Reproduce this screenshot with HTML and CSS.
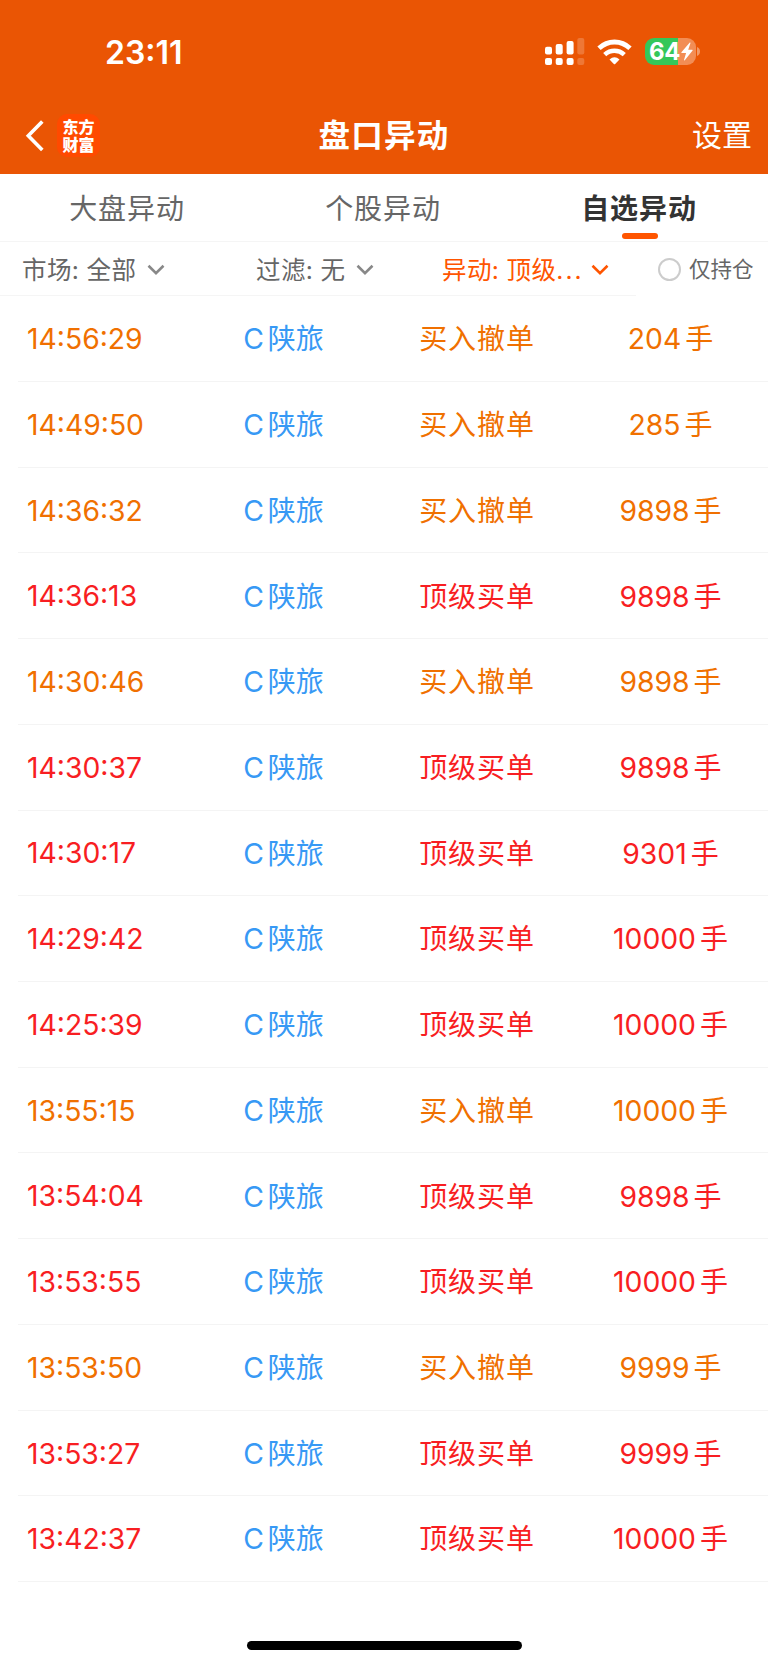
FILE: index.html
```
<!DOCTYPE html>
<html lang="zh-CN">
<head>
<meta charset="utf-8">
<title>盘口异动</title>
<link rel="stylesheet" href="styles.css">
</head>
<body>
<div class="screen">
<header class="header">
  <div class="status">
    <div class="clock">23:11</div>
    <div class="indicators">
      <svg class="signal" width="40" height="28" viewBox="0 0 40 28" fill="#fff">
        <rect x="0" y="8.700" width="7" height="7.800" rx="2"/><rect x="10.700" y="6" width="7" height="10.500" rx="2"/><rect x="21.600" y="3" width="7" height="13.500" rx="2"/><rect x="32.300" y="0" width="7" height="16.500" rx="2" opacity=".2"/>
        <rect x="0" y="20" width="7" height="7" rx="2"/><rect x="10.700" y="20" width="7" height="7" rx="2"/><rect x="21.600" y="20" width="7" height="7" rx="2"/><rect x="32.300" y="20" width="7" height="7" rx="2" opacity=".2"/>
      </svg>
      <svg class="wifi" width="35" height="26" viewBox="0 0 35 26">
        <path d="M2 9.300C10.800.9 24.200.9 33 9.300" fill="none" stroke="#fff" stroke-width="4.800"/>
        <path d="M7.700 15.600c5.800-5.200 13.800-5.200 19.600 0" fill="none" stroke="#fff" stroke-width="4.600"/>
        <path d="M12.500 20.500Q17.500 16.200 22.500 20.500L18.200 25Q17.500 25.600 16.800 25Z" fill="#fff"/>
      </svg>
      <div class="battery">
        <span class="level">64</span>
        <svg width="12" height="19" viewBox="0 0 12 19" fill="#fff"><path d="M8.800.5.4 10.200q-.4.8.4.8h4.300L3 18q.1.800.8.300l7.800-9.700q.4-.8-.5-.8H7.200L9.500 1q0-.800-.7-.5z"/></svg>
      </div>
      <svg class="battery-cap" width="3" height="9" viewBox="0 0 3 9"><path d="M0 0q3 1.200 3 4.500T0 9z" fill="#fff" opacity=".4"/></svg>
    </div>
  </div>
  <nav class="nav">
    <div class="nav-left">
      <svg width="20" height="34" viewBox="0 0 20 34"><path d="M17.300 2.500 3.300 16.800l14 14.300" fill="none" stroke="#fff" stroke-width="3.600"/></svg>
      <div class="logo">东方<br>财富</div>
    </div>
    <h1 class="title">盘口异动</h1>
    <div class="settings">设置</div>
  </nav>
</header>
<div class="tabs">
  <div class="tab">大盘异动</div>
  <div class="tab">个股异动</div>
  <div class="tab active">自选异动</div>
</div>
<div class="filters">
  <div class="filter market"><span>市场: 全部</span><svg class="chevron" width="18" height="12" viewBox="0 0 18 12"><path d="M1.500 1.800 9 9.200l7.500-7.400"/></svg></div>
  <div class="filter sieve"><span>过滤: 无</span><svg class="chevron" width="18" height="12" viewBox="0 0 18 12"><path d="M1.500 1.800 9 9.200l7.500-7.400"/></svg></div>
  <div class="filter kind"><span>异动: 顶级<span class="dots">...</span></span><svg class="chevron" width="18" height="12" viewBox="0 0 18 12"><path d="M1.500 1.800 9 9.200l7.500-7.400"/></svg></div>
  <div class="holding"><i class="radio"></i><span>仅持仓</span></div>
</div>
<main class="list">
  <div class="row cancel"><span class="time">14:56:29</span><span class="name"><b>C</b>陕旅</span><span class="type">买入撤单</span><span class="amount"><b>204</b>手</span></div>
  <div class="row cancel"><span class="time">14:49:50</span><span class="name"><b>C</b>陕旅</span><span class="type">买入撤单</span><span class="amount"><b>285</b>手</span></div>
  <div class="row cancel"><span class="time">14:36:32</span><span class="name"><b>C</b>陕旅</span><span class="type">买入撤单</span><span class="amount"><b>9898</b>手</span></div>
  <div class="row buy"><span class="time">14:36:13</span><span class="name"><b>C</b>陕旅</span><span class="type">顶级买单</span><span class="amount"><b>9898</b>手</span></div>
  <div class="row cancel"><span class="time">14:30:46</span><span class="name"><b>C</b>陕旅</span><span class="type">买入撤单</span><span class="amount"><b>9898</b>手</span></div>
  <div class="row buy"><span class="time">14:30:37</span><span class="name"><b>C</b>陕旅</span><span class="type">顶级买单</span><span class="amount"><b>9898</b>手</span></div>
  <div class="row buy"><span class="time">14:30:17</span><span class="name"><b>C</b>陕旅</span><span class="type">顶级买单</span><span class="amount"><b>9301</b>手</span></div>
  <div class="row buy"><span class="time">14:29:42</span><span class="name"><b>C</b>陕旅</span><span class="type">顶级买单</span><span class="amount"><b>10000</b>手</span></div>
  <div class="row buy"><span class="time">14:25:39</span><span class="name"><b>C</b>陕旅</span><span class="type">顶级买单</span><span class="amount"><b>10000</b>手</span></div>
  <div class="row cancel"><span class="time">13:55:15</span><span class="name"><b>C</b>陕旅</span><span class="type">买入撤单</span><span class="amount"><b>10000</b>手</span></div>
  <div class="row buy"><span class="time">13:54:04</span><span class="name"><b>C</b>陕旅</span><span class="type">顶级买单</span><span class="amount"><b>9898</b>手</span></div>
  <div class="row buy"><span class="time">13:53:55</span><span class="name"><b>C</b>陕旅</span><span class="type">顶级买单</span><span class="amount"><b>10000</b>手</span></div>
  <div class="row cancel"><span class="time">13:53:50</span><span class="name"><b>C</b>陕旅</span><span class="type">买入撤单</span><span class="amount"><b>9999</b>手</span></div>
  <div class="row buy"><span class="time">13:53:27</span><span class="name"><b>C</b>陕旅</span><span class="type">顶级买单</span><span class="amount"><b>9999</b>手</span></div>
  <div class="row buy"><span class="time">13:42:37</span><span class="name"><b>C</b>陕旅</span><span class="type">顶级买单</span><span class="amount"><b>10000</b>手</span></div>
</main>
<footer class="home"><div class="home-bar"></div></footer>
</div>
</body>
</html>
```
FILE: styles.css
```
* { box-sizing: border-box; }
body {
  margin: 0;
  background: #fff;
  font-family: Inter, "Noto Sans CJK SC", sans-serif;
}
.screen {
  width: 768px;
  height: 1665px;
  display: flex;
  flex-direction: column;
  overflow: hidden;
}
.header {
  height: 174px;
  flex: none;
  background: #ea5504;
  color: #fff;
}
.status {
  height: 98px;
  padding: 6px 68px 0 105px;
  display: flex;
  align-items: center;
  justify-content: space-between;
}
.clock {
  padding-top: 2px;
  font-size: 32px;
  font-weight: 600;
  line-height: 40px;
}
.indicators { display: flex; align-items: center; padding-bottom: 1px; }
.wifi { margin-left: 12px; }
.battery {
  width: 51px;
  height: 27px;
  margin-left: 13px;
  border-radius: 9px;
  display: flex;
  align-items: center;
  padding-left: 4px;
  gap: 1px;
  background: linear-gradient(90deg, #34c759 0 64%, #f28d55 64%);
}
.level { font-size: 24px; font-weight: 700; line-height: 27px; letter-spacing: -.3px; }
.battery-cap { margin-left: 1px; }
.nav {
  height: 75px;
  padding: 0 16px 0 25px;
  display: grid;
  grid-template-columns: 195px 1fr 204px;
  align-items: center;
}
.nav-left { display: flex; align-items: center; gap: 12px; }
.logo {
  width: 43px;
  height: 43px;
  border-radius: 10px;
  background: #ff4a00;
  padding-top: 3px;
  text-align: center;
  font-family: "Noto Sans CJK SC", sans-serif;
  font-size: 16px;
  font-weight: 900;
  line-height: 18px;
}
.title {
  margin: 0;
  padding-bottom: 5px;
  text-align: center;
  font-size: 31.500px;
  font-weight: 600;
  letter-spacing: 1.200px;
}
.settings { padding-bottom: 5px; text-align: right; font-size: 30px; }
.tabs {
  height: 68px;
  flex: none;
  display: grid;
  grid-template-columns: repeat(3, 1fr);
  border-bottom: 1px solid #f5f5f5;
}
.tab {
  position: relative;
  height: 67px;
  padding: 2px 2px 0 0;
  text-align: center;
  font-size: 28px;
  letter-spacing: .9px;
  line-height: 67px;
  color: #666;
}
.active { color: #333; font-weight: 600; }
.active::after {
  content: "";
  position: absolute;
  left: 50%;
  bottom: 2px;
  width: 36px;
  height: 6px;
  margin-left: -18px;
  border-radius: 3px;
  background: #ff5500;
}
.filters {
  height: 54px;
  flex: none;
  display: grid;
  grid-template-columns: 233px 186px 217px 132px;
  color: #666;
  font-size: 24.500px;
  line-height: 50px;
}
.filter {
  display: flex;
  align-items: center;
  gap: 11px;
  height: 54px;
  padding-top: 2px;
  letter-spacing: .4px;
  border-bottom: 1px solid #f5f5f5;
  white-space: nowrap;
}
.market { padding-left: 22px; }
.sieve { padding-left: 23px; }
.kind { padding-left: 23px; color: #ff5500; gap: 7px; }
.dots { letter-spacing: 2px; }
.chevron { fill: none; stroke: #888; stroke-width: 2.600; }
.kind .chevron { stroke: #ff5500; }
.holding { display: flex; align-items: center; padding-left: 22px; gap: 8px; font-size: 21.500px; }
.radio { width: 23px; height: 23px; border: 2px solid #ccc; border-radius: 50%; }
.list { flex: none; margin-top: .300px; padding-left: 18px; }
.row {
  height: 85.730px;
  border-bottom: 1px solid #f4f4f4;
  display: grid;
  grid-template-columns: 172px 187px 200px 187px;
  align-items: center;
  font-size: 28px;
  white-space: nowrap;
}
.row b { font-weight: 400; font-size: 28.300px; margin-right: 4px; }
.time { padding: 1px 0 0 9px; font-size: 28.300px; }
.name, .type, .amount { padding-bottom: 2.500px; }
.name { text-align: center; color: #3799f5; }
.type { text-align: center; letter-spacing: .9px; }
.amount { text-align: center; }
.cancel { color: #f07000; }
.buy { color: #f81e22; }
.home { flex: 1; display: flex; justify-content: center; align-items: flex-end; padding-bottom: 15px; }
.home-bar { width: 275px; height: 9px; border-radius: 5px; background: #000; }
```
